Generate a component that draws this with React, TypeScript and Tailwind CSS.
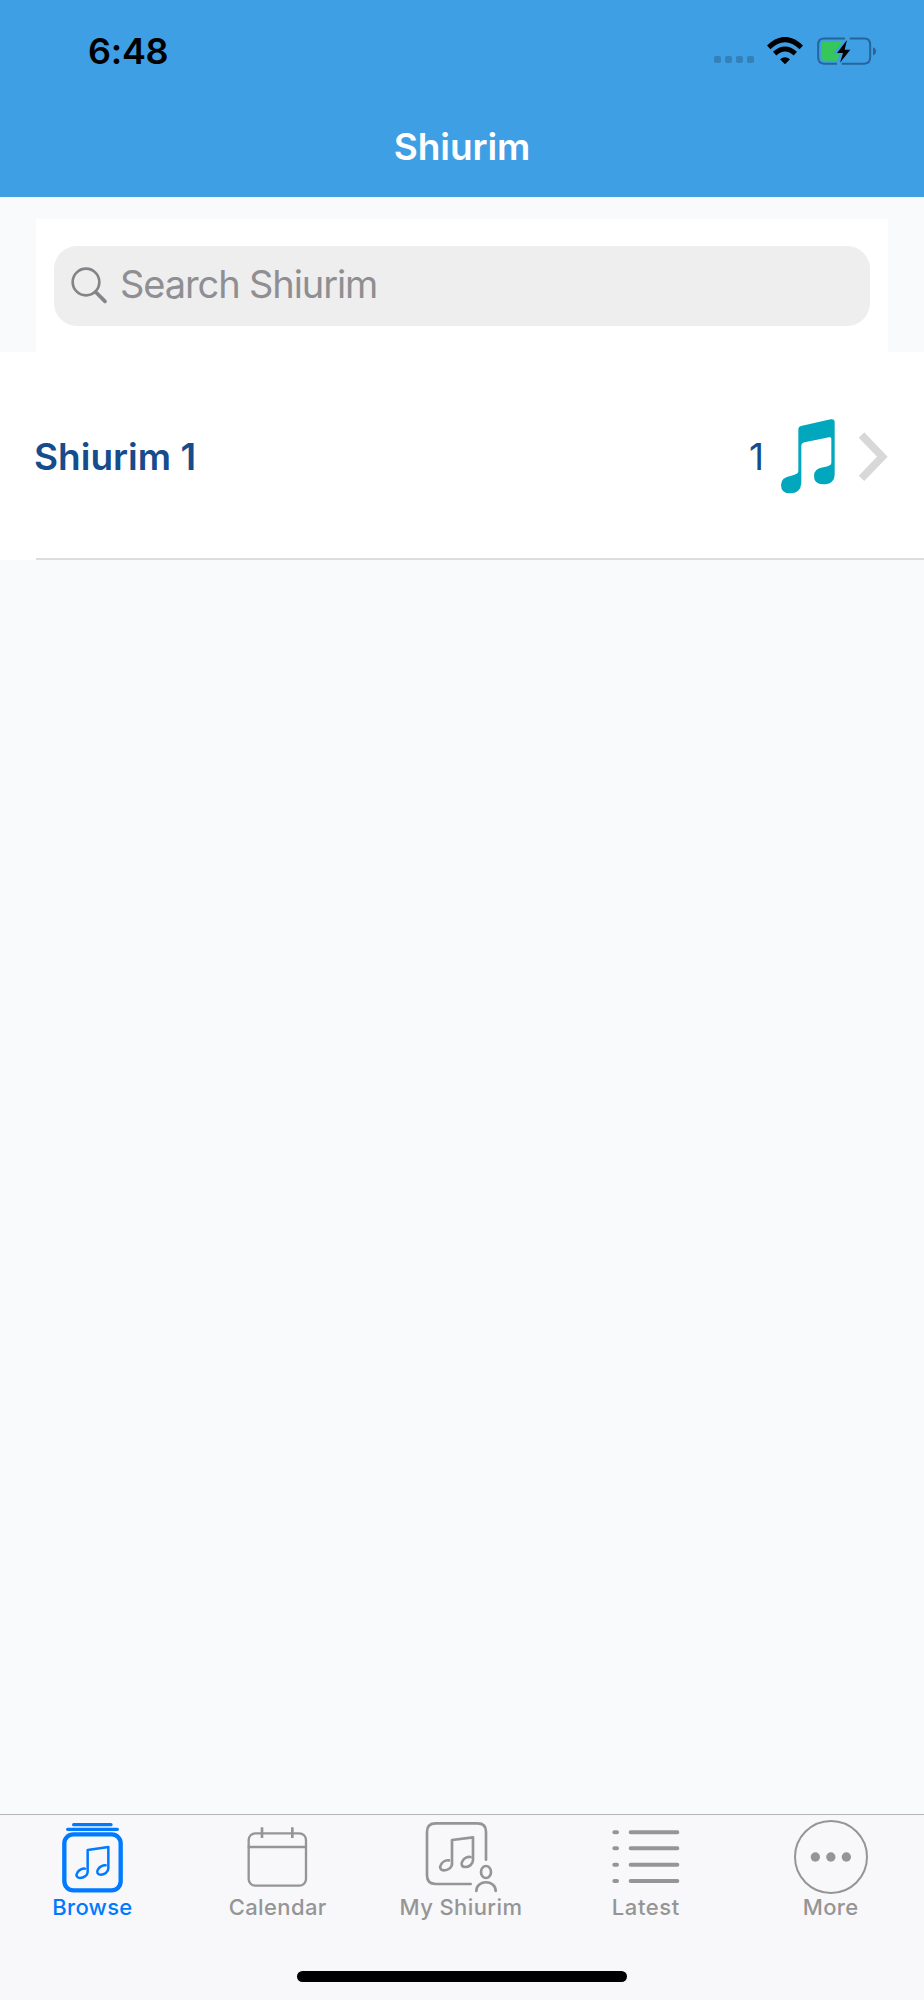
import React from 'react';

interface ITab {
  label: string;
  labelClass: string;
  icon: React.ReactNode;
  active?: boolean;
}

const WifiIcon = () => (
  <svg className="w-[36px] h-[28px]" viewBox="0 0 108 84" fill="none" stroke="#000" strokeWidth="15">
    <path d="M5 31 Q54 -16 103 31" />
    <path d="M23 50 Q54 22 85 50" />
    <path d="M54 82 L39 67 Q54 55 69 67 Z" fill="#000" stroke="none" />
  </svg>
);

const BatteryIcon = () => (
  <svg className="w-[60px] h-[28px]" viewBox="0 0 180 84" fill="none">
    <path
      d="M84 4.500 H21 Q3.500 4.500 3.500 23 V61 Q3.500 80 21 80 H60 M74 80 H142 Q159.500 80 159.500 61 V23 Q159.500 4.500 142 4.500 H98"
      stroke="#256599"
      strokeWidth="6"
    />
    <path d="M168 31 Q177 34 177 43 Q177 52 168 55 Z" fill="#256599" />
    <path d="M22 14 H78 L49 49 H68 L61 71 H22 Q13 71 13 62 V23 Q13 14 22 14 Z" fill="#35c759" />
    <path d="M90 9 L60 48 H78 L69 77 L100 38 H83 Z" fill="#000" />
  </svg>
);

const SearchIcon = () => (
  <svg className="w-[37px] h-[37px]" viewBox="0 0 111 111" fill="none" stroke="#848488">
    <circle cx="45" cy="45" r="40" strokeWidth="8" />
    <path d="M74 75 L102 103" strokeWidth="11" strokeLinecap="round" />
  </svg>
);

const NoteIcon = () => (
  <svg className="w-[56px] h-[77px]" viewBox="0 0 168 231" fill="#00a7bd">
    <path d="M55 35 Q55 26 63 24 L152 4 Q164 2 164 13 V168 Q164 199 129 199 Q102 198 102 174 Q102 152 130 148 Q154 144 154 135 V62 Q154 56 147 58 L74 73 Q64 75 64 84 V195 Q62 226 30 226 Q3 226 3 200 Q3 178 34 173 Q55 169 55 160 Z" />
  </svg>
);

const ChevronIcon = () => (
  <svg className="w-[30px] h-[51px]" viewBox="0 0 90 153" fill="none" stroke="#d8d8d8" strokeWidth="23">
    <path d="M10.500 12 L73 77 L10.500 142" />
  </svg>
);

const tabs: ITab[] = [
  {
    label: 'Browse',
    labelClass: 'tracking-[0.3px]',
    active: true,
    icon: (
      <>
        <path d="M65 29 H177 M47 43 H196" strokeWidth="10" />
        <rect x="37" y="58" width="169" height="168" rx="27" strokeWidth="13" />
        <path
          d="M107 172 V105 L169 96 V160 M107 160 V170 C107 182 95 189 84 189 C74 189 71 181 76 173 C81 164 92 160 99 161 M169 150 V160 C169 172 157 179 146 179 C136 179 133 171 138 163 C143 154 154 150 161 151"
          strokeWidth="7.500"
        />
      </>
    ),
  },
  {
    label: 'Calendar',
    labelClass: 'tracking-[0.4px] translate-x-[0.5px]',
    icon: (
      <>
        <rect x="35" y="55" width="172" height="157" rx="20" strokeWidth="7" />
        <path d="M35 96 H207" strokeWidth="7" />
        <path d="M75 37 V69 M166 37 V69" strokeWidth="8" strokeLinecap="butt" />
      </>
    ),
  },
  {
    label: 'My Shiurim',
    labelClass: 'tracking-[0.4px] -translate-x-px',
    icon: (
      <>
        <path d="M192 134 V50 Q192 25 167 25 H41 Q15 25 15 50 V181 Q15 207 41 207 H146" strokeWidth="8" />
        <path
          d="M90 150 V75 L153 67 V136 M90 134 V146 C90 158 78 166 66 166 C55 166 52 157 57 149 C62 139 73 135 81 136 M153 124 V135 C153 148 141 156 130 156 C119 156 116 147 121 139 C126 129 137 125 145 126"
          strokeWidth="8"
        />
        <ellipse cx="192" cy="171" rx="15" ry="18" strokeWidth="8" />
        <path d="M163 228 C163 193 221 193 221 228" strokeWidth="8" />
      </>
    ),
  },
  {
    label: 'Latest',
    labelClass: 'tracking-[0.6px] -translate-x-px',
    icon: (
      <path
        d="M71 52 H211 M71 100 H211 M71 149 H211 M71 198 H211 M22 52 H30 M22 100 H30 M22 149 H30 M22 198 H30"
        strokeWidth="12"
      />
    ),
  },
  {
    label: 'More',
    labelClass: 'tracking-[0.3px] -translate-x-px',
    icon: (
      <>
        <circle cx="117" cy="126" r="108" strokeWidth="6" />
        <g fill="currentColor" stroke="none">
          <circle cx="70" cy="126" r="14" />
          <circle cx="116.500" cy="126" r="14" />
          <circle cx="163" cy="126" r="14" />
        </g>
      </>
    ),
  },
];

const Header = () => (
  <header className="h-[197px] bg-[#3f9fe5]">
    <div className="flex h-[101px] items-center justify-between pl-[88px] pr-[47px]">
      <span className="text-[36px] leading-none font-semibold tracking-[-0.3px] text-black">6:48</span>
      <div className="flex items-center">
        <div className="mt-[18px] mr-[13px] flex gap-[4px]">
          {[0, 1, 2, 3].map((dot) => (
            <span key={dot} className="h-[7px] w-[7px] rounded-[2px] bg-[#3281bb]" />
          ))}
        </div>
        <WifiIcon />
        <div className="ml-[14px]">
          <BatteryIcon />
        </div>
      </div>
    </div>
    <h1 className="pt-[23px] text-center text-[37px] leading-[46px] font-semibold tracking-[-0.1px] text-white">Shiurim</h1>
  </header>
);

const App: React.FC = () => {
  return (
    <div className="flex h-[2000px] w-[924px] flex-col bg-[#f9fafc] font-['Inter',sans-serif]">
      <Header />

      <div className="h-[155px] px-[36px] pt-[22px]">
        <div className="h-full bg-white px-[18px] pt-[27px]">
          <div className="flex h-[80px] items-center rounded-[23px] bg-[#eeeeee] pb-[2px] pl-[17px]">
            <SearchIcon />
            <span className="ml-[12px] pb-[2px] text-[38px] leading-none tracking-[-1.1px] text-[#8e8e93]">Search Shiurim</span>
          </div>
        </div>
      </div>

      <ul>
        <li className="bg-white">
          <div className="flex h-[206px] items-center pt-[3px] pr-[36px] pl-[34px] text-[#164b8c]">
            <h3 className="flex-1 text-[37px] leading-none font-semibold">Shiurim 1</h3>
            <span className="mr-[16px] text-[37px] leading-none">1</span>
            <NoteIcon />
            <div className="ml-[22px]">
              <ChevronIcon />
            </div>
          </div>
          <div className="ml-[36px] h-[2px] bg-[#dcdcdc]" />
        </li>
      </ul>

      <nav className="mt-auto h-[186px] border-t border-[#b5b6b8] bg-[#f8f8fa]">
        <div className="flex">
          {tabs.map((tab) => (
            <div
              key={tab.label}
              className={`flex flex-1 flex-col items-center ${tab.active ? 'text-[#007aff]' : 'text-[#959596]'}`}
            >
              <svg
                className="h-[80px] w-[80px]"
                viewBox="0 0 240 240"
                fill="none"
                stroke="currentColor"
                strokeLinecap="round"
                strokeLinejoin="round"
              >
                {tab.icon}
              </svg>
              <span className={`text-[22px] leading-[24px] font-medium whitespace-nowrap ${tab.labelClass}`}>
                {tab.label}
              </span>
            </div>
          ))}
        </div>
        <div className="mx-auto mt-[52px] h-[11px] w-[330px] rounded-full bg-black" />
      </nav>
    </div>
  );
};

export default App;
